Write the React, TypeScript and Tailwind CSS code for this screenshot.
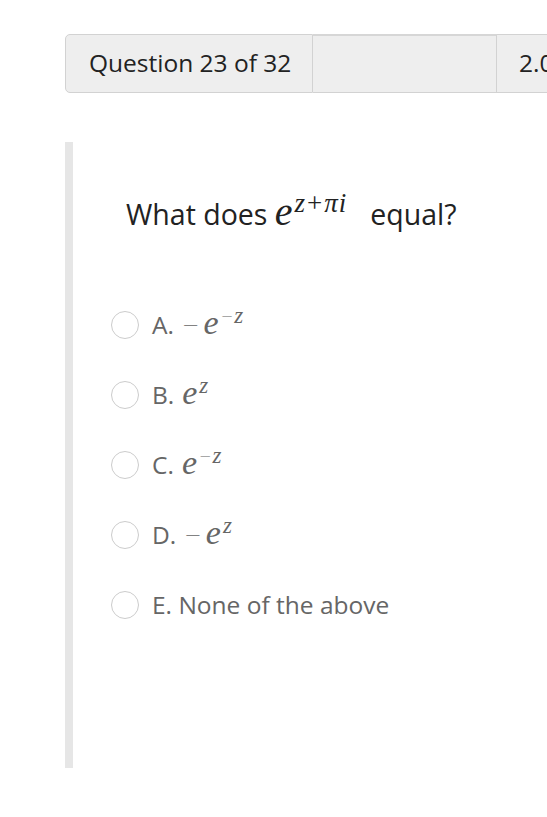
import React from "react";

const SupQ = ({ children }: { children: React.ReactNode }) => (
  <sup className="text-[27px] font-['Liberation_Serif',serif] ml-[2px]">{children}</sup>
);

const SupO = ({ children }: { children: React.ReactNode }) => (
  <sup className="text-[23px] font-['Liberation_Serif',serif] ml-[2px]">{children}</sup>
);

const MathWrap = ({ children }: { children: React.ReactNode }) => (
  <span className="font-['Liberation_Serif',serif] text-[34px] leading-[0px]">{children}</span>
);

const Minus = () => (
  <span className="font-['DejaVu_Sans',sans-serif] text-[21px] font-light mr-[4px] align-[2px]">−</span>
);

const SupMinus = () => (
  <span className="font-['DejaVu_Sans',sans-serif] text-[15px] font-light mr-[1px] align-[2px]">−</span>
);

const options: { label: string; math: React.ReactNode }[] = [
  {
    label: "A.",
    math: (
      <MathWrap>
        <Minus />
        <span className="italic">e</span>
        <SupO>
          <SupMinus />
          <span className="italic">z</span>
        </SupO>
      </MathWrap>
    ),
  },
  {
    label: "B.",
    math: (
      <MathWrap>
        <span className="italic">e</span>
        <SupO>
          <span className="italic">z</span>
        </SupO>
      </MathWrap>
    ),
  },
  {
    label: "C.",
    math: (
      <MathWrap>
        <span className="italic">e</span>
        <SupO>
          <SupMinus />
          <span className="italic">z</span>
        </SupO>
      </MathWrap>
    ),
  },
  {
    label: "D.",
    math: (
      <MathWrap>
        <Minus />
        <span className="italic">e</span>
        <SupO>
          <span className="italic">z</span>
        </SupO>
      </MathWrap>
    ),
  },
  { label: "E. None of the above", math: null },
];

export default function App() {
  return (
    <div className="w-[547px] h-[817px] overflow-hidden bg-white font-['Open_Sans',sans-serif]">
      <div className="pl-[65px] pt-[34px]">
        <div className="flex h-[59px] w-[600px]">
          <div className="w-[248px] shrink-0 flex items-center pl-[23px] bg-[#eeeeee] border border-[#d2d2d2] rounded-l-[5px] text-[24.5px] text-[#222]">
            Question 23 of 32
          </div>
          <div className="w-[184px] shrink-0 bg-[#eeeeee] border-y border-r border-[#d2d2d2] border-t-2 border-t-[#d6d6d6]" />
          <div className="w-[150px] shrink-0 flex items-center pl-[22px] bg-[#eeeeee] border-y border-[#d2d2d2] text-[24.5px] text-[#222] whitespace-nowrap">
            2.0 Points
          </div>
        </div>
      </div>
      <div className="ml-[65px] mt-[49px] h-[626px] border-l-8 border-[#e6e6e6]">
        <div className="pt-[52px] pl-[53px] text-[28.5px] leading-[40px] text-[#222] whitespace-nowrap">
          What does{" "}
          <span className="font-['Liberation_Serif',serif] text-[40px] leading-[0px]">
            <span className="italic">e</span>
            <SupQ>
              <span className="italic">z</span>
              <span className="mx-[2px]">+</span>
              <span className="italic">π</span>
              <span className="italic ml-[1px]">i</span>
            </SupQ>
          </span>
          <span className="ml-[24px]">equal?</span>
        </div>
        <div className="mt-[56px] flex flex-col pl-[38px]">
          {options.map((o, i) => (
            <div key={i} className="h-[70px] flex items-center gap-[13px]">
              <div className="w-[28px] h-[28px] rounded-full border border-[#cccccc] bg-white shrink-0" />
              <div className="text-[24.5px] leading-[34px] text-[#666] whitespace-nowrap">
                <span>{o.label}</span>
                {o.math && <span className="ml-[8px]">{o.math}</span>}
              </div>
            </div>
          ))}
        </div>
      </div>
    </div>
  );
}
